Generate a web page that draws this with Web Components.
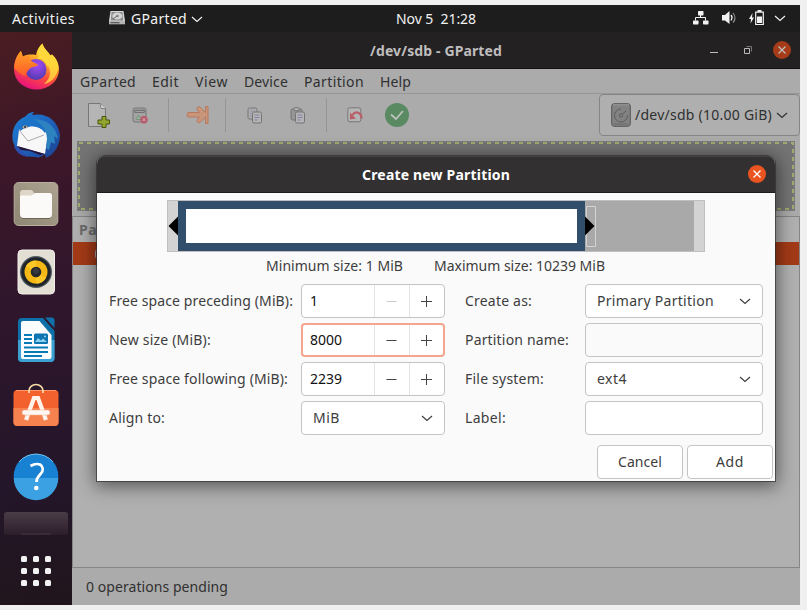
<!DOCTYPE html>
<html lang="en">
<head>
<meta charset="utf-8">
<title>GParted</title>
<style>
html,body{margin:0;background:#f0f0f0}
body{width:807px;height:610px;overflow:hidden;padding-top:5px;box-sizing:border-box;font:14px/20px "Noto Sans","Open Sans",sans-serif}
</style>
</head>
<body>
<desktop-shell></desktop-shell>
<script>
const define=(name,html,setup)=>customElements.define(name,class extends HTMLElement{
  connectedCallback(){
    if(this.shadowRoot)return;
    const root=this.attachShadow({mode:'open'});
    const t=document.createElement('template');
    t.innerHTML=typeof html==='function'?html(this):html;
    root.append(t.content.cloneNode(true));
    if(setup)setup(this,root);
  }
});

/* Single-line text whose tracking is adjusted to a given width. */
define('ui-text','<style>:host{display:block;white-space:nowrap;flex:none}span{display:inline-block;white-space:nowrap}</style><span><slot></slot></span>',(el,root)=>{
  const w=+el.getAttribute('w');
  if(!w)return;
  const s=root.querySelector('span'),n=el.textContent.length;
  el.style.width=w+'px';
  s.style.letterSpacing=((w-s.getBoundingClientRect().width)/n)+'px';
});

const icons={
firefox:['0 0 48 48',`<defs><linearGradient id="a" x1=".8" y1="0" x2=".35" y2="1"><stop offset="0" stop-color="#fff04a"/><stop offset=".35" stop-color="#ffb527"/><stop offset=".65" stop-color="#ff4f3b"/><stop offset="1" stop-color="#e6107f"/></linearGradient><radialGradient id="b" cx=".55" cy=".3" r=".7"><stop offset="0" stop-color="#a64cf5"/><stop offset="1" stop-color="#503bb0"/></radialGradient><linearGradient id="c" x1="0" y1="0" x2="0" y2="1"><stop offset="0" stop-color="#ffa024"/><stop offset="1" stop-color="#ff5a2c"/></linearGradient></defs>
<g transform="translate(0 -1)"><path d="M24 12c1-5 3-8.500 6.500-11.500 1 5 6 8.500 8 12l1.500-1c4.500 4 7 9.500 7 15a22.500 20 0 0 1-45 0C2 18 5 12 9 8l2 5.500c3-2 9-2.500 13-1.500z" fill="url(#a)"/><path d="M30.500.5c1 5 6 8.500 8 12l1.500-1c4.500 4 6 8 6.500 13C44 36 38 40 32 41c6-5 8-12 4-18-3-5-9-8-11-13 1-4 3-7 5.500-9.500z" fill="#ffdc3e" opacity=".8"/><circle cx="24" cy="26.500" r="10.500" fill="url(#b)"/><path d="M25 16c6-1 9 2 10 8 3-4 1-11-6-14z" fill="#ffd93c"/><path d="M2 25C3 15 7 10 9 8l1.500 6 6.500-1.500c1 4 2 6 5 7l4 2c-1 2.500-6 2-8 4-3 2-4 5-4 8C9 32 6 29 2 25z" fill="url(#c)"/></g>`],
thunderbird:['0 0 48 48',`<defs><linearGradient id="a" x1="0" y1="0" x2="1" y2="1"><stop offset="0" stop-color="#1c83d6"/><stop offset=".5" stop-color="#1f62bd"/><stop offset="1" stop-color="#1c3f8c"/></linearGradient></defs><path d="M14 4c2-3 5-4 8-4l-2 3c14-3 26 5 28 20 0 10-5 19-14 23l-1-4c-3 3-7 4-10 3-10 0-18-4-22-15C-1 20 2 9 14 4z" fill="url(#a)"/><path d="M5 34l5 6 7 5c-9-1-13-5-15-11z" fill="#294eaf"/><path d="M7 18c9-6 19-5 26 2l3 1-3 21L5 34z" fill="#f7f7f8"/><path d="M7 18l9 11 16-6" fill="none" stroke="#aaa" stroke-width="1"/><path d="M8 19c0-9 7-15 17-12 9 2 8 9 8 14-6-8-14-9-25-2z" fill="#1c72c6"/><path d="M22 7c13 1 22 7 24 20l-4-3 1 8-4-2-2 8-3-2c3-14-1-22-12-29z" fill="#2d83c0"/><path d="M5 34l28 8-5 1-10-4-9-1z" fill="#281238"/><ellipse cx="13" cy="15" rx="2.500" ry="1.500" fill="#c8a887"/><circle cx="13" cy="15" r="1" fill="#162f50"/>`],
files:['0 0 48 48',`<defs><linearGradient id="a" x1="0" x2="1" y1="1" y2="0"><stop stop-color="#8e8674"/><stop offset="1" stop-color="#ada390"/></linearGradient></defs><rect x="2.200" y="2.500" width="43.600" height="43" rx="4.500" fill="url(#a)" stroke="#b9b09e"/><path d="M8 17v-4q0-3 3-3h8q2 0 3 3h15q3 0 3 3v4z" fill="#ded7c9"/><path d="M8 17q0-1.500 1.500-1.500h10l4-2.500H37q3 0 3 3v18q0 4-4 4H12q-4 0-4-4z" fill="#fbfaf8"/><path d="M10 38.500h28" stroke="#6e6555"/>`],
music:['0 0 48 48',`<rect x="6" y="2" width="36.500" height="44" rx="4" fill="#e3dfd5" stroke="#f0ede6"/><circle cx="24" cy="24" r="16" fill="#525c63"/><circle cx="24" cy="24" r="14.800" fill="#20252b"/><circle cx="24" cy="24" r="11.500" fill="#f4b915"/><path d="M24 24L14 18a11.500 11.500 0 0 1 10-5.500zM24 24l10 6a11.500 11.500 0 0 1-10 5.500z" fill="#fbc728"/><circle cx="24" cy="24" r="5.300" fill="#24272b"/><circle cx="24" cy="23" r="3" fill="#35393d"/>`],
writer:['0 0 48 48',`<path d="M10 2h21l11.500 13v27q0 4-4 4H10q-4 0-4-4V6q0-4 4-4z" fill="#0d70a9"/><path d="M6 24h36.500v18q0 4-4 4H10q-4 0-4-4z" fill="#3da0d2"/><path d="M11 5h16.500L39.500 19v22q0 2-2 2H11q-2 0-2-2V7q0-2 2-2z" fill="#fafbfc"/><path d="M33 1.500h6.500q3 0 3 3V12z" fill="#1071a9"/><path d="M12 19h8M12 23h8M12 27h8M12 31.500h24M12 36h24M12 40h18" stroke="#087ab8" stroke-width="1.800"/><rect x="22" y="17.500" width="14" height="10.500" rx="1.500" fill="#0b75b2"/><path d="M23 26l3-4 3 2.500 2-2 4 3.500z" fill="#8ed1ee"/><circle cx="33" cy="20.500" r="1" fill="#8ed1ee"/>`],
software:['0 0 48 48',`<rect x="1.500" y="6" width="45" height="36" rx="4" fill="#f3622e"/><path d="M1.500 24h45v14q0 4-4 4h-37q-4 0-4-4z" fill="#f5824f"/><path d="M4 6.500h40" stroke="#ff966e"/><path d="M17 9V7a7 6.500 0 0 1 14 0v2" fill="none" stroke="#f6dca5" stroke-width="1.700"/><path d="M14 36L22 14h4l8 22" fill="none" stroke="#fff3ec" stroke-width="4.200" clip-path="inset(0)"/><rect x="10" y="26" width="28" height="5" rx="2.500" fill="#fff7f2" stroke="#f0a98c" stroke-width=".5"/>`],
help:['0 0 48 48',`<circle cx="24" cy="24" r="22.300" fill="#1881d1"/><path d="M1.700 26h44.600a22.300 22.300 0 0 1-44.600 0z" fill="#3ba1e2"/><path d="M7 10a22.200 22.200 0 0 1 34 0" fill="none" stroke="#75bfea"/><path d="M18.500 14q5-3 9.500-1.500c3.500 2 3.500 6 1 9-2.500 2.500-4.500 4-4.500 8.500" fill="none" stroke="#fff" stroke-width="2.700"/><circle cx="24.300" cy="36" r="2.300" fill="#fff"/>`],
apps:['0 0 30 30',[0,12,24].map(y=>[0,12,24].map(x=>`<rect x="${x}" y="${y}" width="6" height="6" rx="1.500" fill="#f3f2f2"/>`).join('')).join('')],
drive:['0 0 16 14',`<path d="M1.500 0h13L16 10H0z" fill="#d8d8d8"/><path d="M2.500 1h11l.7 8.500H1.800z" fill="#8c8c8c"/><ellipse cx="8.300" cy="5" rx="5" ry="3.600" fill="#d4d4d4"/><circle cx="8.500" cy="5" r="1.300" fill="#888"/><path d="M4 8l4-3" stroke="#666"/><path d="M0 10h16v3.300H0z" fill="#b5b5b5"/><path d="M1.500 11.700h9" stroke="#555" stroke-width="1.200"/>`],
chevron:['0 0 12 12',`<path d="M1 4l5 4.500L11 4" fill="none" stroke="currentColor" stroke-width="1.150"/>`],
net:['0 0 16 14',`<rect x="5" y="0" width="5.500" height="4.500" rx=".7"/><rect y="9.500" width="5.500" height="4" rx=".7"/><rect x="10" y="9.500" width="5.500" height="4" rx=".7"/><path d="M7.500 4v3M2.500 9.500v-3h10v3" fill="none" stroke="currentColor"/>`],
volume:['0 0 16 14',`<path d="M0 4h3l4.500-4v13L3 9.500H0z"/><path d="M9 4q2 2.500 0 5.500" fill="none" stroke="currentColor" stroke-width="1.300"/><path d="M11 2q4 5 0 9.500" fill="none" stroke="#8b8b8b" stroke-width="1.200"/>`],
battery:['0 0 15 16',`<path d="M3.500 3L0 9h2l-.5 4.500L5 7.500H3z"/><path d="M6.700 2.200h7.600v12.300H6.700z" fill="none" stroke="currentColor" stroke-width="1.200"/><path d="M8 6.500h5V13H8zM8.500 0h4v2h-4z"/>`],
newfile:['0 0 24 26',`<path d="M1.500 1.500h12l5 5v18h-17z" fill="#b5b5b5" stroke="#777"/><path d="M13 1.500l1 5h5" fill="#d3d3d3" stroke="#808080"/><path d="M15 14.500h4V18h3.500v4H19v3.500h-4V22h-4v-4h4z" fill="#93a52e" stroke="#46590a"/>`],
remove:['0 0 16 17',`<rect x="1" y="1" width="13" height="14" rx="2" fill="#a3a3a3" stroke="#777"/><path d="M2.800 3.300h9.500v2h-9.500z" fill="#b0b0b0" stroke="#666"/><path d="M4 11.500L6.500 8 9 11.500M4 12.500h5" fill="none" stroke="#6e9d74"/><circle cx="12" cy="12.700" r="3.700" fill="#b75969"/><path d="M10.500 11.200l3 3m0-3l-3 3" stroke="#d1b2b7"/>`],
resize:['0 0 24 20',`<path d="M2 7.500h11.500L11 4.500q-.5-1.500 1-2.500 1.500-.5 2.500.5l5 5V1.500h2.500v17h-2.500V12l-5 5q-1 1-2.500.5-1.500-1-1-2.500l2.500-3H2q-2-2.200 0-4.500z" fill="#c9967c" stroke="#b8795c" stroke-linejoin="round"/>`],
copy:['0 0 16 17',`<rect x="1" y="1" width="9" height="11" rx="1.500" fill="#adadad" stroke="#747474"/><path d="M3 4h5M3 6.500h3M3 9h2" stroke="#9895a8"/><rect x="5.500" y="5" width="9" height="11" rx="1.500" fill="#b4b4b4" stroke="#747474"/><path d="M7.500 8h5M7.500 10.500h5M7.500 13h3" stroke="#8581a6"/>`],
paste:['0 0 16 17',`<rect x="1" y="2" width="11" height="11" rx="1.500" fill="#969696" stroke="#747474"/><rect x="4" y="0.700" width="5" height="3" rx="1" fill="#b5b5b5" stroke="#747474"/><rect x="5.500" y="5" width="9" height="11" rx="1.500" fill="#b4b4b4" stroke="#747474"/><path d="M7.500 8h5M7.500 10.500h5M7.500 13h3" stroke="#8581a6"/>`],
undo:['0 0 16 16',`<rect x=".8" y=".8" width="13" height="14" rx="2" fill="#b5b5b5" stroke="#777"/><path d="M14.500 11.500c0-6-6-8-9-3.500" fill="none" stroke="#b85f67" stroke-width="2.200"/><path d="M3 5.500v7l6-1z" fill="#b85f67"/>`],
apply:['0 0 24 24',`<circle cx="12" cy="12" r="12" fill="#598a62"/><path d="M6 11.500l5 4.500 7-8" fill="none" stroke="#bdc2bd" stroke-width="1.800"/>`],
disk:['0 0 20 24',`<rect x=".7" y=".7" width="18.600" height="22.600" rx="2.500" fill="#828282" stroke="#555"/><path d="M2 1.800h16" stroke="#999"/><path d="M10 6a6.500 6.500 0 1 0 6.500 6.500M15 8l-3.500 3" fill="none" stroke="#5c5c5c"/><circle cx="10" cy="12.500" r="1.700" fill="none" stroke="#5c5c5c"/><path d="M3 21h14" stroke="#686868"/>`],
min:['0 0 8 10',`<path d="M0 7.500h8" stroke="currentColor"/>`],
max:['0 0 8 8',`<path d="M.5 2.500h5v5h-5z" fill="none" stroke="#bbb"/><path d="M2.500.5h5v5" fill="none" stroke="#777"/>`],
cross:['0 0 8 8',`<path d="M.5.5l7 7m0-7l-7 7" stroke="currentColor" stroke-width="1.300"/>`],
minus:['0 0 11 11',`<path d="M.5 5.500h10" stroke="currentColor"/>`],
plus:['0 0 11 11',`<path d="M0 5.500h11M5.500 0v11" stroke="currentColor"/>`]
};
define('ui-icon',el=>{const i=icons[el.getAttribute('name')];return `<style>:host{display:block;flex:none}svg{display:block;width:100%;height:100%;overflow:visible}</style><svg viewBox="${i[0]}" fill="currentColor">${i[1]}</svg>`},el=>{
  el.style.width=el.getAttribute('w')+'px';el.style.height=(el.getAttribute('h')||el.getAttribute('w'))+'px';
});

define('top-bar',`<style>:host{display:flex;align-items:center;height:27px;padding:0 14px 0 12px;background:#1d1d1d;color:#f2f2f2;box-sizing:border-box}.right{display:flex;align-items:center;margin-left:auto;padding-bottom:1px}</style>
<ui-text w="63">Activities</ui-text><ui-icon name="drive" w="16" h="14" style="margin:0 6px 2px 34px"></ui-icon><ui-text w="56">GParted</ui-text><ui-icon name="chevron" w="12" style="margin-left:4px"></ui-icon>
<ui-text w="80" style="margin-left:193px">Nov 5 &nbsp;21:28</ui-text>
<div class="right"><ui-icon name="net" w="16" h="14" style="margin-right:13px"></ui-icon><ui-icon name="volume" w="16" h="14" style="margin-right:11px"></ui-icon><ui-icon name="battery" w="15" h="16" style="margin-right:10px"></ui-icon><ui-icon name="chevron" w="12"></ui-icon></div>`);

define('app-dock',`<style>:host{display:flex;flex-direction:column;align-items:center;width:72px;background:linear-gradient(170deg,#4a1d21 0,#3d1728 20%,#2f162c 48%,#24162a 78%,#20151b 100%);padding-top:2px;box-sizing:border-box}.slot{height:68px;display:flex;align-items:center;flex:none}.slab{width:64px;height:23px;border-radius:3px 3px 0 0;background:linear-gradient(#4b3d47,#2c1d2a);margin:2px 0 21px;display:flex;align-items:flex-end;justify-content:center}.slab i{width:30px;height:2px;background:#3c2c34}</style>
${['firefox','thunderbird','files','music','writer','software','help'].map(n=>`<div class="slot"><ui-icon name="${n}" w="48"></ui-icon></div>`).join('')}
<div class="slab"><i></i></div><ui-icon name="apps" w="30"></ui-icon>`);

define('round-close',`<style>:host{display:flex;align-items:center;justify-content:center;width:18.500px;height:18.500px;border-radius:50%;background:var(--close);flex:none}</style><ui-icon name="cross" w="8"></ui-icon>`);

define('main-window',`<style>
:host{display:flex;flex-direction:column;width:728px;background:#ababab;color:#303030}
.title{height:37px;box-sizing:border-box;display:flex;align-items:center;background:#242122;border-bottom:1px solid #141213;color:#bfbdbe;font-weight:bold;padding:0 9px 0 298px}
.title ui-text{padding-top:1px}
.ctl{margin-left:auto;display:flex;align-items:center;gap:21px;color:#c0bdb9}
.menu{height:25px;box-sizing:border-box;display:flex;align-items:center;gap:16px;padding:2px 8px 0 8px;border-bottom:1px solid #979797}
.tools{height:44px;display:flex;align-items:center;padding-left:15px}
.tools>ui-icon,.sep{margin-bottom:2px}
.sep{width:1px;height:34px;background:#959595}
.device{width:201px;height:42px;margin:0 0 0 auto;border:1px solid #858585;border-radius:4px;box-sizing:border-box;display:flex;align-items:center;padding-left:11px;background:#afafaf;align-self:flex-start}
.disk{height:70px;margin:3px 5px 0;box-sizing:border-box;background:#747474;display:flex;border:1px solid #7d7d7d;flex:none}.disk svg{width:100%;height:100%;display:block}
.tree{flex:1;margin:5px 0 0;border:1px solid #858585;background:#b0b0b0;box-sizing:border-box;width:728px}
.head{height:25px;color:#6b6b6b;font-weight:bold;padding-left:6px;display:flex;align-items:center}
.row{height:23px;background:#a33a17;display:flex;align-items:center}
.row i{display:block;width:6px;height:8px;margin-left:22px;border:1px solid #b6a1ae;border-radius:3px}
.status{height:37px;display:flex;align-items:center;padding-left:14px}
</style>
<div class="title"><ui-text w="132">/dev/sdb - GParted</ui-text><div class="ctl"><ui-icon name="min" w="8" h="10" style="margin-right:5px"></ui-icon><ui-icon name="max" w="8"></ui-icon><round-close style="--close:#a53b18"></round-close></div></div>
<div class="menu"><ui-text w="56">GParted</ui-text><ui-text w="27">Edit</ui-text><ui-text w="33">View</ui-text><ui-text w="44">Device</ui-text><ui-text w="60">Partition</ui-text><ui-text w="31">Help</ui-text></div>
<div class="tools"><ui-icon name="newfile" w="24" h="26"></ui-icon><ui-icon name="remove" w="16" h="17" style="margin-left:21px;margin-right:20px"></ui-icon><div class="sep"></div><ui-icon name="resize" w="24" h="20" style="margin-left:17px;margin-right:15px"></ui-icon><div class="sep"></div><ui-icon name="copy" w="16" h="17" style="margin-left:21px;margin-right:27px"></ui-icon><ui-icon name="paste" w="16" h="17"></ui-icon><div class="sep" style="margin-left:20px;margin-right:20px"></div><ui-icon name="undo" w="16" style="margin-right:22px"></ui-icon><ui-icon name="apply" w="24"></ui-icon>
<div class="device"><ui-icon name="disk" w="20" h="24"></ui-icon><ui-text w="137" style="margin:0 4px">/dev/sdb (10.00 GiB)</ui-text><ui-icon name="chevron" w="12"></ui-icon></div></div>
<div class="disk"><svg><rect x="1" y="1" width="714" height="66" fill="none" stroke="#a5a870" stroke-width="2" stroke-dasharray="4 4"/></svg></div>
<div class="tree"><div class="head"><ui-text w="18">Pa</ui-text></div><div class="row"><i></i></div></div>
<div class="status"><ui-text w="142">0 operations pending</ui-text></div>`);

define('size-bar',`<style>:host{display:flex;width:538px;height:52px;box-sizing:border-box;border:1px solid #bfbfbf;background:#d3d3d3;margin:0 auto}svg{display:block}</style>
<svg width="536" height="50"><path fill="#a9a9a9" d="M417 0h109v50H417z"/><path fill="#314e6c" d="M10 0h407v50H10z"/><path fill="#fff" d="M18 8h391v34H18z"/><path d="M10 15.500v19L.5 25z"/><path d="M418.500 5.500h9v40h-9z" fill="none" stroke="#d3d3d3"/><path d="M417 15.500v19l9.500-9.500z"/></svg>`);

define('spin-field',el=>`<style>:host{display:flex;height:34px;box-sizing:border-box;border:1px solid #c4c4c4;border-radius:4px;background:#fff;color:#111;align-items:stretch;overflow:hidden}:host([focused]){border:2px solid #f3a68c}.v{flex:1;display:flex;align-items:center;padding-left:8px}:host([focused]) .v{padding-left:7px}.b{width:34px;border-left:1px solid #e4e4e4;display:flex;align-items:center;justify-content:center;color:#444}.b ui-icon{margin-right:1px}:host([focused]) .b:last-child{width:33px}:host([focused]) .b:last-child ui-icon{margin-right:0}.off{color:#ccc}</style><div class="v"><ui-text w="${el.getAttribute('value').length*8}">${el.getAttribute('value')}</ui-text></div><div class="b ${el.hasAttribute('at-min')?'off':''}"><ui-icon name="minus" w="11"></ui-icon></div><div class="b"><ui-icon name="plus" w="11"></ui-icon></div>`);

define('combo-box',`<style>:host{display:flex;height:34px;box-sizing:border-box;border:1px solid #c4c4c4;border-radius:4px;background:#fff;align-items:center;justify-content:space-between;padding:0 11px}</style><slot></slot><ui-icon name="chevron" w="12"></ui-icon>`);
define('text-field',`<style>:host{display:block;height:34px;box-sizing:border-box;border:1px solid #c4c4c4;border-radius:4px;background:#fff}:host([disabled]){background:#fafafa}</style>`);
define('push-button',`<style>:host{display:flex;width:86px;height:34px;box-sizing:border-box;border:1px solid #c4c4c4;border-radius:4px;background:#fff;align-items:center;justify-content:center}</style><slot></slot>`);

define('partition-dialog',`<style>
:host{display:flex;flex-direction:column;width:678px;height:325px;background:#fafafa;color:#3d3d3d;border-radius:8px 8px 0 0;box-shadow:0 0 0 1px rgba(45,45,45,.65),0 3px 18px 2px rgba(0,0,0,.52);overflow:hidden}
.title{height:37px;box-sizing:border-box;background:#333031;border-top:1px solid #454243;border-bottom:1px solid #1e1b1c;display:flex;align-items:center;padding:0 9px 0 265px;justify-content:space-between;color:#fff;font-weight:bold;flex:none}
.title round-close{margin-bottom:1px}
.body{padding-top:7px;display:flex;flex-direction:column}
.limits{display:flex;gap:31px;height:28px;align-items:center;padding-left:169px;margin-bottom:4px}
.form{display:grid;grid-template-columns:192px 144px 20px 120px 178px;row-gap:5px;padding-left:12px;align-items:center}
.form>:nth-child(4n+3){grid-column:4}
.buttons{display:flex;justify-content:flex-end;gap:4px;padding:10px 2px 0 0}
</style>
<div class="title"><ui-text w="148">Create new Partition</ui-text><round-close style="--close:#e95420"></round-close></div>
<div class="body"><size-bar></size-bar>
<div class="limits"><ui-text w="137">Minimum size: 1 MiB</ui-text><ui-text w="171">Maximum size: 10239 MiB</ui-text></div>
<div class="form">
<ui-text w="184">Free space preceding (MiB):</ui-text><spin-field value="1" at-min></spin-field><ui-text w="67">Create as:</ui-text><combo-box><ui-text w="117">Primary Partition</ui-text></combo-box>
<ui-text w="102">New size (MiB):</ui-text><spin-field value="8000" focused></spin-field><ui-text w="104">Partition name:</ui-text><text-field disabled></text-field>
<ui-text w="179">Free space following (MiB):</ui-text><spin-field value="2239"></spin-field><ui-text w="79">File system:</ui-text><combo-box><ui-text w="30">ext4</ui-text></combo-box>
<ui-text w="56">Align to:</ui-text><combo-box><ui-text w="27">MiB</ui-text></combo-box><ui-text w="41">Label:</ui-text><text-field></text-field>
</div>
<div class="buttons"><push-button><ui-text w="44">Cancel</ui-text></push-button><push-button><ui-text w="28">Add</ui-text></push-button></div></div>`);

define('desktop-shell',`<style>:host{display:flex;flex-direction:column;width:800px;height:600px;position:relative;overflow:hidden}.work{flex:1;display:flex;min-height:0}partition-dialog{position:absolute;left:97px;top:151px}</style><top-bar></top-bar><div class="work"><app-dock></app-dock><main-window></main-window></div><partition-dialog></partition-dialog>`);
</script>
</body>
</html>
